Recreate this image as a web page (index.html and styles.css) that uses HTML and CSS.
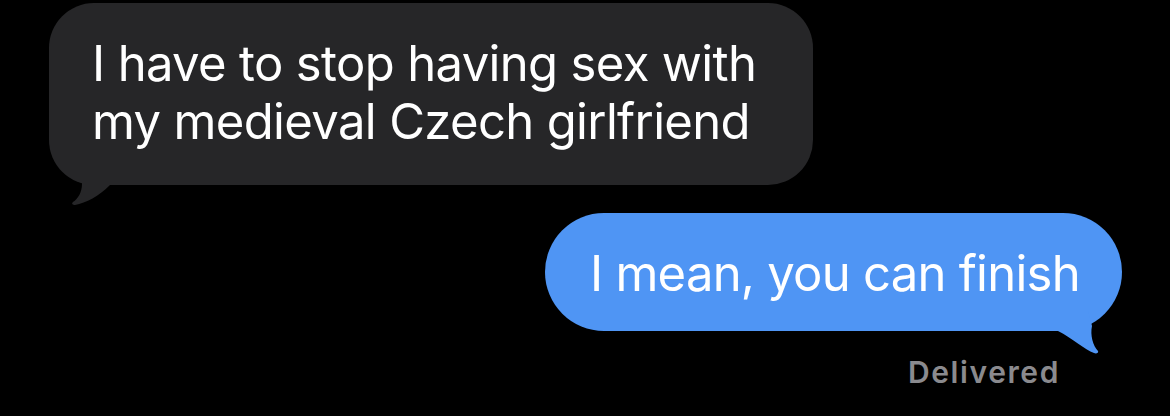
FILE: index.html
```html
<!DOCTYPE html>
<html lang="en">
<head>
<meta charset="utf-8">
<title>Messages</title>
<link rel="stylesheet" href="styles.css">
</head>
<body>
<main class="thread">
  <div class="bubble bubble-in">
    <span class="line">I have to stop having sex with</span>
    <span class="line">my medieval Czech girlfriend</span>
    <svg class="tail tail-in" width="50" height="40" viewBox="0 0 50 40" aria-hidden="true">
      <path d="M11 0 L11 5 C11 13 7 20 2 23 C0 25 2 26 4 26 C15 24 28 17 39 6 L39 0 Z" fill="#262628"/>
    </svg>
  </div>
  <div class="bubble bubble-out">
    <span class="line">I mean, you can finish</span>
    <svg class="tail tail-out" width="60" height="65" viewBox="0 0 60 65" aria-hidden="true">
      <path d="M38 20 L42 36 C40 45 43 56 48 61 C49 63 46 64 44 63 C35 60 22 48 8 41 L8 20 Z" fill="#4f95f4"/>
    </svg>
  </div>
  <div class="status">Delivered</div>
</main>
</body>
</html>
```

FILE: styles.css
```css
html, body {
  margin: 0;
  padding: 0;
  background: #000;
}

body {
  width: 1170px;
  height: 416px;
  overflow: hidden;
  font-family: "Inter", "Noto Sans", sans-serif;
}

.thread {
  display: flex;
  flex-direction: column;
  padding: 3px 48px 0 49px;
}

.bubble {
  position: relative;
  box-sizing: border-box;
  color: #fff;
  font-size: 49px;
  line-height: 58px;
  letter-spacing: -0.65px;
}

.line {
  display: block;
  white-space: nowrap;
}

.bubble-in {
  align-self: flex-start;
  width: 764px;
  background: #262628;
  border-radius: 45px;
  padding: 32px 43px 34px 43px;
}

.bubble-out {
  align-self: flex-end;
  width: 577px;
  margin-top: 28px;
  background: #4f95f4;
  border-radius: 59px;
  padding: 32px 44px 28px 45px;
}

.bubble-out .line {
  letter-spacing: -0.75px;
}

.tail {
  position: absolute;
  display: block;
}

.tail-in {
  left: 22px;
  top: 176px;
}

.tail-out {
  right: 12px;
  top: 77px;
}

.status {
  align-self: flex-end;
  margin-top: 24px;
  margin-right: 62px;
  color: #8a8a8e;
  font-size: 30px;
  line-height: 34px;
  font-weight: 600;
  letter-spacing: 1.6px;
}
```
